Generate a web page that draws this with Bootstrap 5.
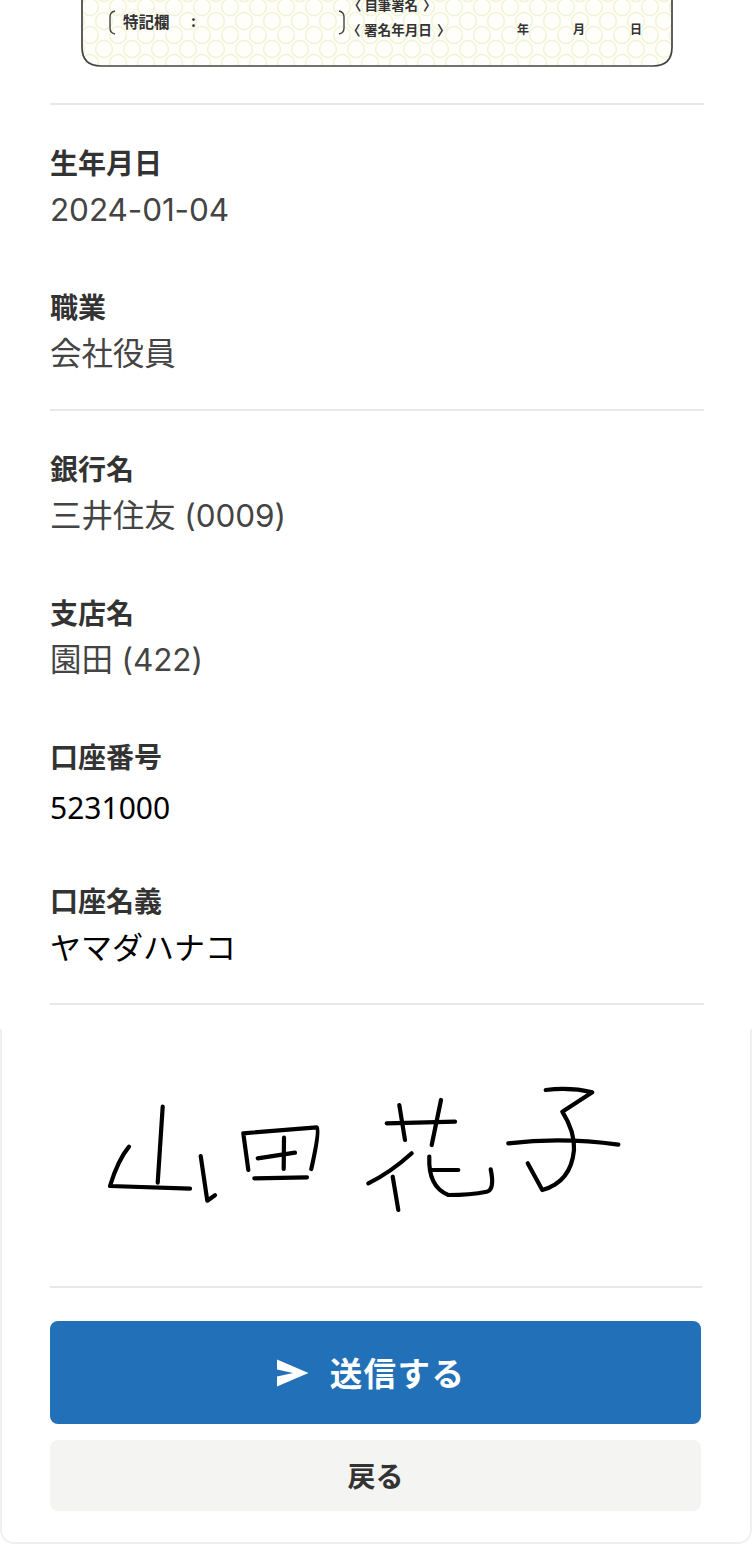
<!DOCTYPE html>
<html lang="ja">
<head>
<meta charset="utf-8">
<title>確認</title>
<link rel="stylesheet" href="https://cdn.jsdelivr.net/npm/bootstrap@5.3.0/dist/css/bootstrap.min.css">
<style>
html,body{background:#fff}
body{font-family:"Noto Sans CJK JP","Noto Sans",sans-serif;width:752px;height:1545px;overflow:hidden}
.sheet{padding:0 48px 0 50px}
.mynum{display:block;width:594px;height:68px;margin:-1px 0 0 30px}
.mynum text{font-family:"Noto Sans CJK JP",sans-serif;font-weight:700;fill:#333}
.rule{height:2px;background:#e8e8e8;opacity:1;border:0;margin:0}
.rule-top{margin-top:36px}
.grp{padding-top:37px}
.fld{height:144px}
.fld:last-child{height:123px}
.lbl{font-size:28px;line-height:40px;font-weight:700;color:#333;margin:0}
.val{font-family:Inter,"Noto Sans CJK JP",sans-serif;font-size:31.5px;letter-spacing:-.1px;line-height:46px;color:#444;margin:5px 0 0}
.val-black{color:#000;font-size:31px;letter-spacing:0}
.val-num{font-family:"Noto Sans",sans-serif;font-size:30px;padding-top:4px}
.panel{margin-top:24px;height:515px;border:solid #f0f0f0;border-width:0 2px 2px 2px;border-radius:0 0 14px 14px;padding:0 49px 0 48px}
.sign{display:block;width:752px;height:257px;margin-left:-50px}
.sign path{fill:none;stroke:#000;stroke-width:4.2;stroke-linecap:round;stroke-linejoin:round}
.panel-rule{margin-right:-1px}
.btn-send,.btn-send:hover{background:#2170b8;color:#fff;height:103px;margin-top:33px;border:0;border-radius:8px;font-size:32.5px;font-weight:700;letter-spacing:1.4px;gap:21px;padding:0 9px 0 0}
.btn-send svg{width:32px;height:28px;fill:#fff}
.btn-back,.btn-back:hover{background:#f4f4f2;color:#333;height:71px;margin-top:16px;border:0;border-radius:8px;font-size:28px;font-weight:700;padding:0 0 2px}
</style>
</head>
<body>
<div class="sheet">
  <svg class="mynum" viewBox="80 -1 594 68" role="img" aria-label="特記欄">
    <defs>
      <pattern id="rings" width="28" height="28" patternUnits="userSpaceOnUse" x="20" y="7">
        <circle cx="14" cy="0" r="8.4" fill="none" stroke="#f2f3d3" stroke-width="1.5"/>
        <circle cx="14" cy="28" r="8.4" fill="none" stroke="#f2f3d3" stroke-width="1.5"/>
        <circle cx="0" cy="14" r="8.4" fill="none" stroke="#f2f3d3" stroke-width="1.5"/>
        <circle cx="28" cy="14" r="8.4" fill="none" stroke="#f2f3d3" stroke-width="1.5"/>
      </pattern>
    </defs>
    <path d="M82 -8V47Q82 66 101 66H653Q672 66 672 47V-8Z" fill="#fefefb"/>
    <path d="M82 -8V47Q82 66 101 66H653Q672 66 672 47V-8Z" fill="url(#rings)"/>
    <path d="M82 -8V47Q82 66 101 66H653Q672 66 672 47V-8" fill="none" stroke="#444" stroke-width="1.7"/>
    <path d="M115 11Q110 12 110 17V28Q110 33 115 34" fill="none" stroke="#444" stroke-width="1.4"/>
    <path d="M339 11Q344 12 344 17V28Q344 33 339 34" fill="none" stroke="#444" stroke-width="1.4"/>
    <text x="123" y="28" font-size="15.5">特記欄</text>
    <text x="191" y="27" font-size="15">:</text>
    <text x="348" y="9.5" font-size="13.4">〈<tspan dx="3">自筆署名</tspan><tspan dx="5">〉</tspan></text>
    <text x="347" y="34.5" font-size="13.6">〈<tspan dx="3.4">署名年月日</tspan><tspan dx="5">〉</tspan></text>
    <text x="517" y="34" font-size="12">年</text>
    <text x="573" y="34" font-size="12">月</text>
    <text x="630" y="34" font-size="12">日</text>
  </svg>
  <hr class="rule rule-top">
  <div class="grp">
    <div class="fld"><p class="lbl">生年月日</p><p class="val">2024-01-04</p></div>
    <div class="fld"><p class="lbl">職業</p><p class="val">会社役員</p></div>
  </div>
  <hr class="rule">
  <div class="grp">
    <div class="fld"><p class="lbl">銀行名</p><p class="val">三井住友 (0009)</p></div>
    <div class="fld"><p class="lbl">支店名</p><p class="val">園田 (422)</p></div>
    <div class="fld"><p class="lbl">口座番号</p><p class="val val-black val-num">5231000</p></div>
    <div class="fld"><p class="lbl">口座名義</p><p class="val val-black">ヤマダハナコ</p></div>
  </div>
  <hr class="rule">
</div>
<div class="panel">
  <svg class="sign" viewBox="0 1029 752 257" role="img" aria-label="署名">
    <path d="M162.7 1106.7L157.7 1182.7"/>
    <path d="M129 1146.7Q118 1160 110 1186L190 1188.7"/>
    <path d="M200.7 1156L207.3 1200.7L215 1195.3"/>
    <path d="M248.3 1170L243.3 1133.3L316.7 1127.3Q320 1130 311.3 1169"/>
    <path d="M257.7 1158.3L295 1152.7"/>
    <path d="M284 1137.7L283.7 1169"/>
    <path d="M254.3 1178.3L307 1177.3"/>
    <path d="M386.7 1123.3L455 1121.7"/>
    <path d="M399.3 1105L405 1140"/>
    <path d="M441 1100L431.7 1145"/>
    <path d="M411.7 1153.3Q390 1173 368.3 1183.3"/>
    <path d="M392.7 1176.7L398.3 1210"/>
    <path d="M429.3 1156.7Q428 1187 448.3 1195Q470 1195 486.7 1191.7Q495 1190 490.7 1169.3"/>
    <path d="M431 1170L458.3 1170"/>
    <path d="M545.7 1090Q570 1087 592.3 1092.3L562.3 1111.7Q575 1132 574 1150Q571 1182 542.3 1190L527.7 1163.3"/>
    <path d="M508.3 1143.3Q563 1137 618.3 1144.7"/>
  </svg>
  <hr class="rule panel-rule">
  <button type="button" class="btn btn-send w-100 d-flex align-items-center justify-content-center">
    <svg viewBox="277 1359 32 28" aria-hidden="true"><polygon points="277,1359.5 308.5,1373 277,1386.5 277,1376.5 293,1373 277,1369.5"/></svg>
    <span>送信する</span>
  </button>
  <button type="button" class="btn btn-back w-100 d-flex align-items-center justify-content-center">戻る</button>
</div>
<script src="https://cdn.jsdelivr.net/npm/bootstrap@5.3.0/dist/js/bootstrap.bundle.min.js"></script>
</body>
</html>
